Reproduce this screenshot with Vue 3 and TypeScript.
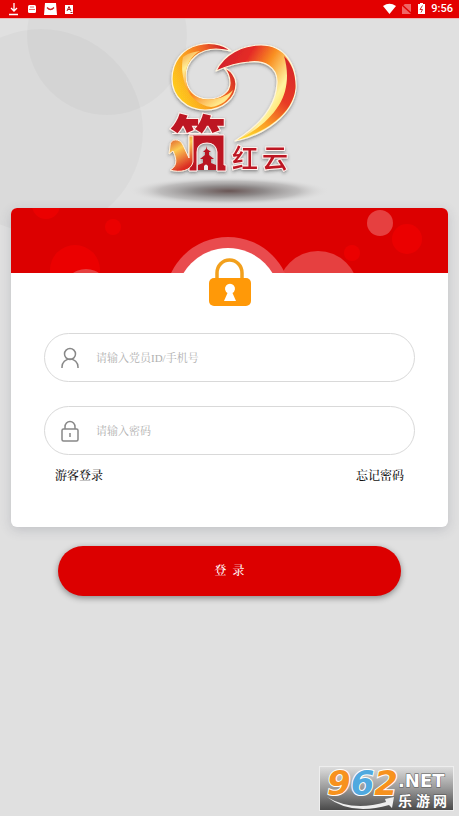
<script setup lang="ts">
import { ref } from 'vue'

interface Bubble { x: number; y: number; r: number; kind: string }

const account = ref('')
const password = ref('')

const bubbles: Bubble[] = [
  { x: 35, y: -3, r: 14, kind: 'deep' },
  { x: 102, y: 19, r: 8, kind: 'deep' },
  { x: 64, y: 62, r: 25, kind: 'deep' },
  { x: 75, y: 84, r: 23, kind: 'pale' },
  { x: 396, y: 31, r: 15, kind: 'deep' },
  { x: 341, y: 45, r: 8, kind: 'deep' },
  { x: 369, y: 15, r: 13, kind: 'pale' },
  { x: 307, y: 83, r: 40, kind: 'pale' },
]
</script>

<template>
  <div class="page">
    <svg class="backdrop" viewBox="0 0 200 240" aria-hidden="true">
      <circle cx="41" cy="131" r="102" />
      <circle cx="107" cy="35" r="80" />
    </svg>

    <header class="status">
      <svg class="notices" viewBox="0 0 80 18" aria-hidden="true">
        <path d="M14 3v8M11 8l3 3 3-3M9 14.500h9" fill="none" stroke="#fff" stroke-width="1.300" />
        <rect x="28" y="5" width="8" height="8" rx="1.500" fill="#fff" />
        <path d="M30 7h4M29 9.500h6" stroke="#e87070" />
        <path d="M45 3h11l1 12H44z" fill="#fff" />
        <path d="M47 7.500q3.500 4 7 0" fill="none" stroke="#c22" stroke-width="1.300" />
        <rect x="65" y="5" width="8" height="9" fill="#fff" />
        <path d="M67 11l2-4.500L71 11M68 9.500h2M70.500 12.500h2" fill="none" stroke="#a22" />
      </svg>
      <div class="system">
        <svg class="signals" viewBox="0 0 46 18" aria-hidden="true">
          <path d="M2 6Q8.500 1.500 15 6L8.500 14z" fill="#fff" />
          <path d="M21 6l3-2h6v10h-9z" fill="#ef6666" />
          <path d="M20 4l11 10" stroke="#e30000" stroke-width="1.500" />
          <path d="M37 4h2V3h3v1h2v10h-7z" fill="#fff" />
          <path d="M41.500 5.500L39 9.500h2.500L40 12.500" fill="none" stroke="#c33" />
        </svg>
        <time class="clock">9:56</time>
      </div>
    </header>

    <main class="content">
      <svg class="logo" viewBox="125 36 210 172" role="img" aria-label="筑红云">
        <defs>
          <linearGradient id="ring" x1="0" y1=".7" x2="1" y2=".2">
            <stop offset="0" stop-color="#ffd01f" /><stop offset=".4" stop-color="#f99b20" />
            <stop offset=".65" stop-color="#ef6426" /><stop offset=".9" stop-color="#cf2028" />
          </linearGradient>
          <linearGradient id="ringGlow" x1="0" y1="0" x2=".6" y2="1">
            <stop offset="0" stop-color="#f7a03a" /><stop offset=".25" stop-color="#fff09a" />
            <stop offset=".65" stop-color="#f98320" /><stop offset="1" stop-color="#ffe88a" />
          </linearGradient>
          <linearGradient id="sweep" x1="0" y1="0" x2=".9" y2=".65">
            <stop offset="0" stop-color="#c91d2c" /><stop offset=".36" stop-color="#e52c27" />
            <stop offset=".58" stop-color="#f99022" /><stop offset=".83" stop-color="#fff4a0" /><stop offset="1" stop-color="#ffd84c" />
          </linearGradient>
          <linearGradient id="tail" x1=".7" y1="0" x2=".1" y2="1">
            <stop offset="0" stop-color="#d92929" /><stop offset=".35" stop-color="#e83b25" />
            <stop offset=".7" stop-color="#fba125" /><stop offset="1" stop-color="#ffe12e" />
          </linearGradient>
          <linearGradient id="ribbon" x1="0" y1="0" x2=".4" y2="1">
            <stop offset="0" stop-color="#d84422" /><stop offset=".45" stop-color="#fccb52" /><stop offset="1" stop-color="#db2d23" />
          </linearGradient>
          <radialGradient id="floor">
            <stop offset="0" stop-color="#695554" /><stop offset=".35" stop-color="#858080" stop-opacity=".9" />
            <stop offset=".7" stop-color="#a7a5a5" stop-opacity=".6" /><stop offset="1" stop-color="#ddd" stop-opacity="0" />
          </radialGradient>
          <filter id="lift" x="-20%" y="-20%" width="140%" height="140%">
            <feDropShadow dx="0" dy="1.500" stdDeviation="1.500" flood-color="#333" flood-opacity=".5" />
          </filter>
          <clipPath id="crown"><rect x="165" y="108" width="65" height="26" /></clipPath>
        </defs>
        <ellipse cx="229" cy="191" rx="100" ry="14" fill="url(#floor)" />
        <g filter="url(#lift)" stroke="#fff5dc" stroke-width="1.200" stroke-linejoin="round">
          <path d="M231 51C222 43 208 42 198 45C182 49 172 62 172 79C172 97 187 110 205 110C223 110 236 98 236 84C236 77 231 70 224 68C228 72 230 77 230 83C230 92 221 99 208 99C195 99 186 90 186 76C186 60 200 49 216 49C222 49 226 50 231 51Z" fill="url(#ring)" />
          <path d="M216 71C224 54 242 45 261 45C285 45 297 65 296 88C294 114 265 135 235 141C257 127 276 108 277 83C278 67 264 60 249 62C236 63 225 67 216 71Z" fill="url(#sweep)" />
        </g>
        <path d="M183 57C179 77 188 104 211 107C221 106 229 100 233 90C226 97 217 99.500 208 99.500C195 99.500 185.500 90 185.500 76C185.500 65 192 55 200 51C192 52 187 54 183 57Z" fill="url(#ringGlow)" />
        <path d="M284 56C289 72 288 91 279 105C269 121 254 132 237 140C263 133 293 115 295.500 88C296 75 292 63 284 56Z" fill="url(#tail)" />
        <g filter="url(#lift)">
          <g clip-path="url(#crown)">
            <text class="logo-crown" x="170" y="162">筑</text>
          </g>
          <path d="M189 135H224V165H226V171H217V152Q216 143 207 143Q197 143 197 152V171H189Z" fill="#bd1724" stroke="#fff0eb" />
          <path d="M170 146C170 138 180 138 183 145L189 158V136H193V162C191 171 180 173 170 170C176 167 178 161 173 151L169 154Z" fill="url(#ribbon)" stroke="#fff0dc" />
          <path d="M206 146l1 3 4 3h-2v3l5 4h-3v4l5 2v5h-18v-5l5-2v-4h-3l5-4v-3h-2l3-3z" fill="#b91824" />
          <path d="M204 170v-4q2-3 4 0v4z" fill="#eee" />
          <text class="logo-name" x="232 262" y="168">红云</text>
        </g>
      </svg>

      <form id="login" class="card" @submit.prevent>
        <svg class="banner" viewBox="0 0 437 65" preserveAspectRatio="xMidYMid slice" aria-hidden="true">
          <circle v-for="(b, i) in bubbles" :key="i" :cx="b.x" :cy="b.y" :r="b.r" :class="b.kind" />
          <circle class="halo" cx="217" cy="92" r="63" />
          <circle class="dome" cx="217" cy="92" r="52" />
        </svg>
        <svg class="badge" viewBox="0 0 42 49" aria-hidden="true">
          <path d="M8 22V15a12.500 13 0 0 1 25 0V22" fill="none" stroke="#f2a01d" stroke-width="3.500" />
          <rect y="20" width="42" height="28" rx="5" fill="#ff9908" />
          <path d="M15 43l3.500-8a5 5 0 1 1 5 0l3.500 8z" fill="#fff" />
        </svg>

        <div class="fields">
          <label class="field">
            <svg class="glyph" viewBox="0 0 20 22" aria-hidden="true">
              <circle cx="10" cy="7" r="5.500" /><path d="M2 21v-1a8 8 0 0 1 16 0v1" />
            </svg>
            <input v-model="account" type="text" placeholder="请输入党员ID/手机号" aria-label="请输入党员ID/手机号">
          </label>
          <label class="field">
            <svg class="glyph" viewBox="0 0 20 22" aria-hidden="true">
              <rect x="2" y="9" width="16" height="12" rx="1.500" /><path d="M5 9V7a5 5.500 0 0 1 10 0v2M10 13v4" />
            </svg>
            <input v-model="password" type="password" placeholder="请输入密码" aria-label="请输入密码">
          </label>
        </div>
        <nav class="links">
          <a href="#guest">游客登录</a>
          <a href="#forgot">忘记密码</a>
        </nav>
      </form>

      <button class="submit" type="submit" form="login">登&nbsp; 录</button>
    </main>

    <svg class="stamp" viewBox="0 0 135 45" role="img" aria-label="962.NET 乐游网">
      <defs>
        <linearGradient id="plate" x1="0" y1="0" x2="0" y2="1">
          <stop offset="0" stop-color="#dedede" /><stop offset=".5" stop-color="#999" /><stop offset="1" stop-color="#484848" />
        </linearGradient>
      </defs>
      <rect x=".5" y=".5" width="134" height="44" fill="url(#plate)" stroke="#eee" />
      <path d="M8 31Q33 46 67 36L66 33L75 31L73 42L70 39Q32 50 8 31Z" fill="#eee" />
      <text class="digits" x="8" y="29"><tspan class="orange">9</tspan><tspan class="blue">6</tspan><tspan class="orange">2</tspan></text>
      <text class="domain" x="79" y="21">.NET</text>
      <text class="site" x="79 97 114" y="40">乐游网</text>
    </svg>
  </div>
</template>

<style>
body { margin: 0; background: #e0e0e0; }
</style>

<style scoped>
.page {
  position: relative;
  min-height: 100vh;
  background: #e0e0e0;
  font-family: "Liberation Serif", "Noto Serif CJK SC", "Noto Sans CJK SC", serif;
}
.backdrop { position: absolute; top: 0; left: 0; width: 200px; height: 240px; fill: rgba(0, 0, 0, .025); }
.status {
  position: relative;
  display: flex;
  justify-content: space-between;
  height: 18px;
  background: #e30000;
  box-shadow: 0 1px 0 #efb4b4;
}
.notices { width: 80px; height: 18px; }
.system { display: flex; align-items: center; gap: 4px; padding-right: 6px; }
.signals { width: 46px; height: 18px; }
.clock { color: #fff; font: 500 11px/18px Roboto, sans-serif; }
.content {
  position: relative;
  display: flex;
  flex-direction: column;
  align-items: center;
  padding: 18px 11px 24px;
}
.logo { width: 210px; height: 172px; }
.logo text { fill: #bd1724; stroke: #fff0eb; stroke-width: 2px; paint-order: stroke; }
.logo-crown { font: 900 56px "Noto Sans CJK SC", sans-serif; }
.logo-name { font: 500 26px "Noto Sans CJK SC", sans-serif; }
.card {
  align-self: stretch;
  display: flex;
  flex-direction: column;
  border-radius: 6px;
  background: #fff;
  box-shadow: 0 3px 12px rgba(70, 75, 95, .2);
}
.banner { width: 100%; height: 65px; border-radius: 6px 6px 0 0; background: #dc0000; }
.deep { fill: #eb0000; }
.pale { fill: #e64040; }
.halo { fill: #e94b4e; }
.dome { fill: #fff; }
.badge { align-self: center; width: 42px; height: 49px; margin-top: -15px; }
.fields { display: flex; flex-direction: column; gap: 24px; padding: 26px 33px 0; }
.field {
  box-sizing: border-box;
  display: flex;
  align-items: center;
  gap: 16px;
  height: 49px;
  padding: 0 15px;
  border: 1px solid #d9d9d9;
  border-radius: 25px;
}
.glyph { flex: none; width: 20px; height: 22px; fill: none; stroke: #888; stroke-width: 1.5px; }
.field input {
  flex: 1;
  min-width: 0;
  padding: 0;
  border: 0;
  outline: 0;
  background: transparent;
  color: #222;
  font: 11px/20px "Liberation Serif", "Noto Serif CJK SC", "Noto Sans CJK SC", serif;
}
.field input::placeholder { color: #b0b0b0; opacity: 1; }
.links { display: flex; justify-content: space-between; padding: 11px 44px 41px; }
.links a { color: #111; font-size: 12px; font-weight: 500; line-height: 20px; text-decoration: none; }
.submit {
  width: calc(100% - 94px);
  height: 50px;
  margin-top: 19px;
  border: 0;
  border-radius: 25px;
  background: #dc0000;
  box-shadow: 0 2px 6px rgba(0, 0, 0, .4);
  color: #fff;
  font: 500 12px/20px "Liberation Serif", "Noto Serif CJK SC", "Noto Sans CJK SC", serif;
}
.stamp { position: absolute; right: 5px; bottom: 5px; width: 135px; height: 45px; overflow: visible; }
.stamp text { paint-order: stroke; stroke: #fff; stroke-width: 2px; }
.digits { font: italic 700 34px "DejaVu Sans", sans-serif; }
.orange { fill: #f7921e; }
.blue { fill: #50a9df; }
.stamp .domain, .stamp .site { fill: #fff; stroke: #555; stroke-width: 1px; }
.domain { font: 700 18px "DejaVu Sans", sans-serif; }
.site { font: 700 14px "Noto Sans CJK SC", sans-serif; }
</style>
